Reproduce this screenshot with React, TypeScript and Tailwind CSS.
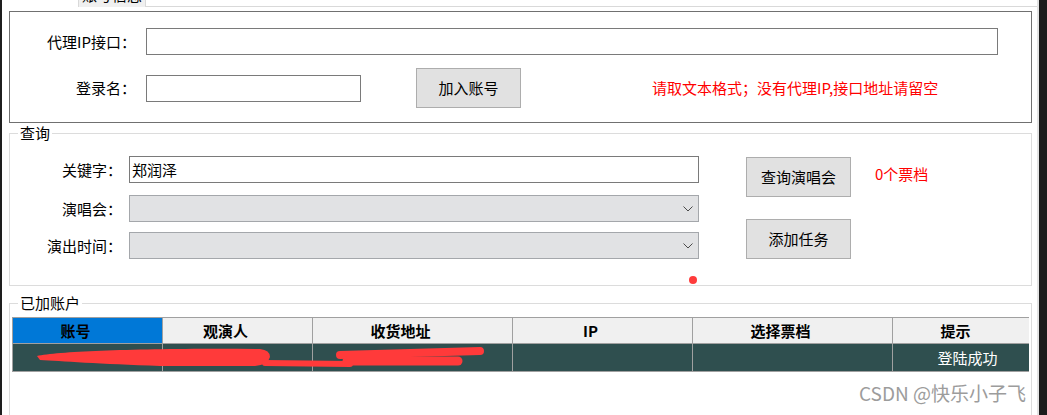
// App.tsx — 抢票工具主窗口（WinForms 风格）

const font = "font-['Noto_Sans_CJK_SC','Microsoft_YaHei',sans-serif]"

function Btn({ label }: { label: string }) {
  return (
    <div className="w-[105px] h-[40px] shrink-0 bg-[#e1e1e1] border border-[#adadad] flex items-center justify-center text-[15px] text-black">
      {label}
    </div>
  )
}

function Chevron() {
  return (
    <svg width="10" height="6" viewBox="0 0 10 6" fill="none" stroke="#4a4a4a" strokeWidth="1">
      <path d="M0.5 0.5L5 5L9.5 0.5" />
    </svg>
  )
}

function Legend({ text }: { text: string }) {
  return (
    <span className="absolute top-[-11px] left-[8px] px-[2px] bg-white text-[15px] leading-[20px] text-black">
      {text}
    </span>
  )
}

const cols = [
  { label: '账号', w: 'w-[150px]' },
  { label: '观演人', w: 'w-[150px]' },
  { label: '收货地址', w: 'w-[200px]' },
  { label: 'IP', w: 'w-[180px]' },
  { label: '选择票档', w: 'w-[200px]' },
  { label: '提示', w: 'w-[150px]' },
]

export default function App() {
  return (
    <div className={`relative flex w-[1047px] h-[415px] overflow-hidden bg-white ${font} text-[15px] leading-[20px] text-black`}>
      <div className="w-[2px] shrink-0 bg-[#1e1e1e]" />

      <div className="w-[1037px] shrink-0 flex flex-col border-r-2 border-[#e3e3e3]">
        {/* tab strip (cut off at the top of the window) */}
        <div className="flex h-[7px] shrink-0">
          <div className="ml-[76px] w-[68px] h-[7px] overflow-hidden bg-[#f0f0f0] border-x border-[#d9d9d9] flex justify-center">
            <span className="mt-[-15px] text-[15px] leading-[20px]">账号信息</span>
          </div>
          <div className="flex-1 border-b border-[#d9d9d9]" />
        </div>

        {/* 代理 / 登录 */}
        <div className="ml-[7px] mt-[4px] w-[1023px] h-[112px] shrink-0 border border-[#707070]">
          <div className="mt-[16px] flex items-center h-[27px]">
            <div className="w-[126px] text-right whitespace-nowrap">代理IP接口：</div>
            <div className="ml-[10px] w-[852px] h-[27px] border border-[#7a7a7a] bg-white" />
          </div>
          <div className="mt-[13px] flex items-center h-[40px]">
            <div className="w-[126px] text-right whitespace-nowrap">登录名：</div>
            <div className="ml-[10px] w-[215px] h-[27px] border border-[#7a7a7a] bg-white" />
            <div className="ml-[55px]">
              <Btn label="加入账号" />
            </div>
            <div className="ml-[131px] text-[#ff0000] whitespace-nowrap">请取文本格式；没有代理IP,接口地址请留空</div>
          </div>
        </div>

        {/* 查询 */}
        <div className="relative ml-[7px] mt-[10px] w-[1023px] h-[153px] shrink-0 border border-[#dcdcdc]">
          <Legend text="查询" />
          <div className="flex">
            <div className="mt-[22px] flex flex-col">
              <div className="flex items-center h-[27px]">
                <div className="w-[112px] text-right whitespace-nowrap">关键字：</div>
                <div className="ml-[7px] w-[570px] h-[27px] border border-[#7a7a7a] pl-[2px] flex items-center">郑润泽</div>
              </div>
              <div className="mt-[12px] flex items-center h-[27px]">
                <div className="w-[112px] text-right whitespace-nowrap">演唱会：</div>
                <div className="ml-[7px] w-[570px] h-[27px] border border-[#a4a7ab] bg-[#e1e2e4] flex items-center justify-end pr-[5px]">
                  <Chevron />
                </div>
              </div>
              <div className="mt-[10px] flex items-center h-[27px]">
                <div className="w-[112px] text-right whitespace-nowrap">演出时间：</div>
                <div className="ml-[7px] w-[570px] h-[27px] border border-[#a4a7ab] bg-[#e1e2e4] flex items-center justify-end pr-[5px]">
                  <Chevron />
                </div>
              </div>
            </div>
            <div className="ml-[47px] flex flex-col">
              <div className="mt-[23px]">
                <Btn label="查询演唱会" />
              </div>
              <div className="mt-[22px]">
                <Btn label="添加任务" />
              </div>
            </div>
            <div className="ml-[24px] mt-[30px] text-[#ff0000] whitespace-nowrap">0个票档</div>
          </div>
          <div className="absolute left-[679px] top-[142px] w-[8px] h-[8px] rounded-full bg-[#ff3b3b]" />
        </div>

        {/* 已加账户 */}
        <div className="relative ml-[7px] mt-[17px] w-[1023px] flex-1 border-t border-x border-[#dcdcdc]">
          <Legend text="已加账户" />
          <div className="mt-[13px] ml-[2px] w-[1017px] overflow-hidden">
            <div className="flex h-[27px] w-max border-y border-l border-[#a0a0a0] bg-[#f0f0f0]">
              {cols.map((c, i) => (
                <div
                  key={c.label}
                  className={`${c.w} shrink-0 border-r border-[#a0a0a0] flex items-center justify-center pr-[24px] font-bold ${i === 0 ? 'bg-[#0078d7]' : ''}`}
                >
                  {c.label}
                </div>
              ))}
            </div>
            <div className="relative flex h-[28px] w-max border-b border-l border-[#a0a0a0] bg-[#2f4f4f] text-white">
              {cols.map((c, i) => (
                <div key={c.label} className={`${c.w} shrink-0 border-r border-[#a0a0a0] flex items-center justify-center`}>
                  {i === 5 ? '登陆成功' : ''}
                </div>
              ))}
              {/* redaction scribbles */}
              <svg className="absolute left-0 top-0" width="500" height="28" viewBox="0 0 500 28" fill="none">
                <path d="M24 12 C47 7 137 4 247 5 Q257 6 257 13 Q255 21 242 22 L147 22 C87 20 47 17 27 16 Z" fill="#ff3a3a" />
                <path d="M252 19 L337 20" stroke="#ff3a3a" strokeWidth="6" strokeLinecap="round" />
                <path d="M327 11 L467 7" stroke="#ff3a3a" strokeWidth="8" strokeLinecap="round" />
                <path d="M334 17 L445 17" stroke="#ff3a3a" strokeWidth="9" strokeLinecap="round" />
              </svg>
            </div>
          </div>
        </div>
      </div>

      <div className="flex-1 bg-[#1c1c1c]" />

      <div className="absolute left-[859px] top-[380px] text-[19px] leading-[26px] text-[#9c9c9c] whitespace-nowrap">
        CSDN @快乐小子飞
      </div>
    </div>
  )
}
